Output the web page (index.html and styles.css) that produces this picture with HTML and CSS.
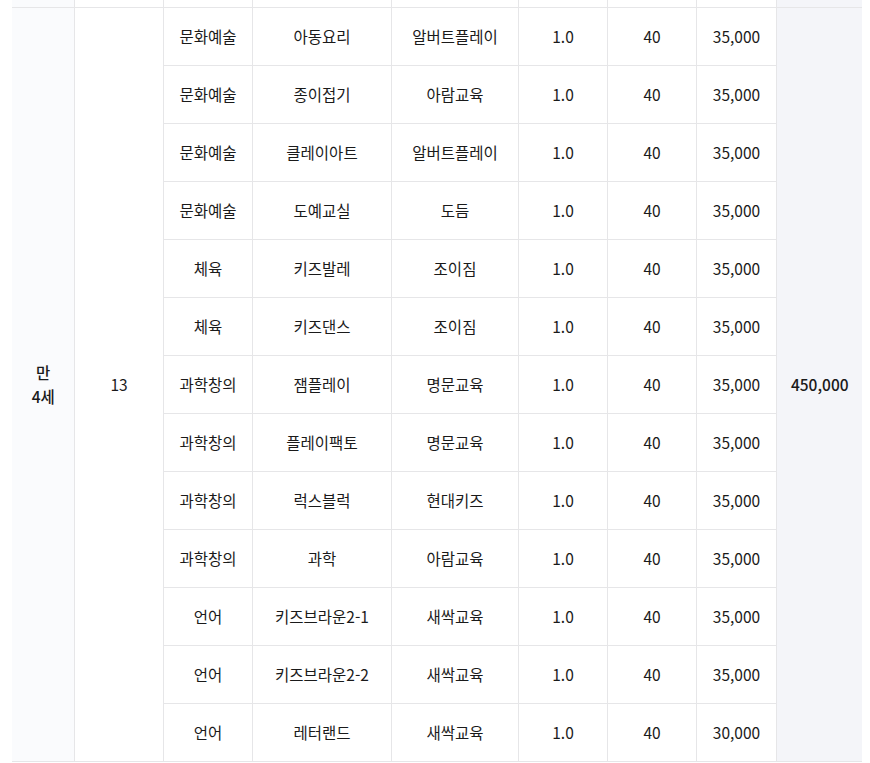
FILE: index.html
```html
<!DOCTYPE html>
<html lang="ko">
<head>
<meta charset="utf-8">
<link rel="stylesheet" href="styles.css">
</head>
<body>
<div class="wrap">
<table class="fee">
  <colgroup>
    <col class="c1"><col class="c2"><col class="c3"><col class="c4"><col class="c5"><col class="c6"><col class="c7"><col class="c8"><col class="c9">
  </colgroup>
  <tbody>
    <tr class="prev">
      <td class="age"></td><td></td><td></td><td></td><td></td><td></td><td></td><td></td><td class="total"></td>
    </tr>
    <tr>
      <td class="age strong" rowspan="13">만<br>4세</td>
      <td rowspan="13">13</td>
      <td>문화예술</td><td>아동요리</td><td>알버트플레이</td><td>1.0</td><td>40</td><td>35,000</td>
      <td class="total strong" rowspan="13">450,000</td>
    </tr>
    <tr><td>문화예술</td><td>종이접기</td><td>아람교육</td><td>1.0</td><td>40</td><td>35,000</td></tr>
    <tr><td>문화예술</td><td>클레이아트</td><td>알버트플레이</td><td>1.0</td><td>40</td><td>35,000</td></tr>
    <tr><td>문화예술</td><td>도예교실</td><td>도듬</td><td>1.0</td><td>40</td><td>35,000</td></tr>
    <tr><td>체육</td><td>키즈발레</td><td>조이짐</td><td>1.0</td><td>40</td><td>35,000</td></tr>
    <tr><td>체육</td><td>키즈댄스</td><td>조이짐</td><td>1.0</td><td>40</td><td>35,000</td></tr>
    <tr><td>과학창의</td><td>잼플레이</td><td>명문교육</td><td>1.0</td><td>40</td><td>35,000</td></tr>
    <tr><td>과학창의</td><td>플레이팩토</td><td>명문교육</td><td>1.0</td><td>40</td><td>35,000</td></tr>
    <tr><td>과학창의</td><td>럭스블럭</td><td>현대키즈</td><td>1.0</td><td>40</td><td>35,000</td></tr>
    <tr><td>과학창의</td><td>과학</td><td>아람교육</td><td>1.0</td><td>40</td><td>35,000</td></tr>
    <tr><td>언어</td><td>키즈브라운2-1</td><td>새싹교육</td><td>1.0</td><td>40</td><td>35,000</td></tr>
    <tr><td>언어</td><td>키즈브라운2-2</td><td>새싹교육</td><td>1.0</td><td>40</td><td>35,000</td></tr>
    <tr><td>언어</td><td>레터랜드</td><td>새싹교육</td><td>1.0</td><td>40</td><td>30,000</td></tr>
  </tbody>
</table>
</div>
</body>
</html>
```
FILE: styles.css
```css
html, body {
  margin: 0;
  padding: 0;
  background: #ffffff;
}
.wrap {
  padding-left: 12px;
}
.fee {
  border-collapse: collapse;
  table-layout: fixed;
  width: 850px;
  font-family: "Noto Sans CJK KR", "Noto Sans", sans-serif;
  font-size: 15.5px;
  color: #1a1a1a;
}
.c1 { width: 62px; }
.c2 { width: 89px; }
.c3 { width: 89px; }
.c4 { width: 139px; }
.c5 { width: 127px; }
.c6 { width: 89px; }
.c7 { width: 89px; }
.c8 { width: 80px; }
.c9 { width: 86px; }
.fee td {
  border: 1px solid #e6e6e8;
  height: 56px;
  padding: 0 0 1px 1px;
  text-align: center;
  vertical-align: middle;
  line-height: 24px;
}
.fee tr:first-child td { border-top: none; }
.fee td:first-child { border-left: none; }
.fee td.total { border-right: none; }
.fee .prev td {
  height: 7px;
  padding: 0;
}
.fee td.age { background: #fafbfd; }
.fee td.total { background: #f4f5f9; }
.strong {
  font-weight: 500;
}
```
